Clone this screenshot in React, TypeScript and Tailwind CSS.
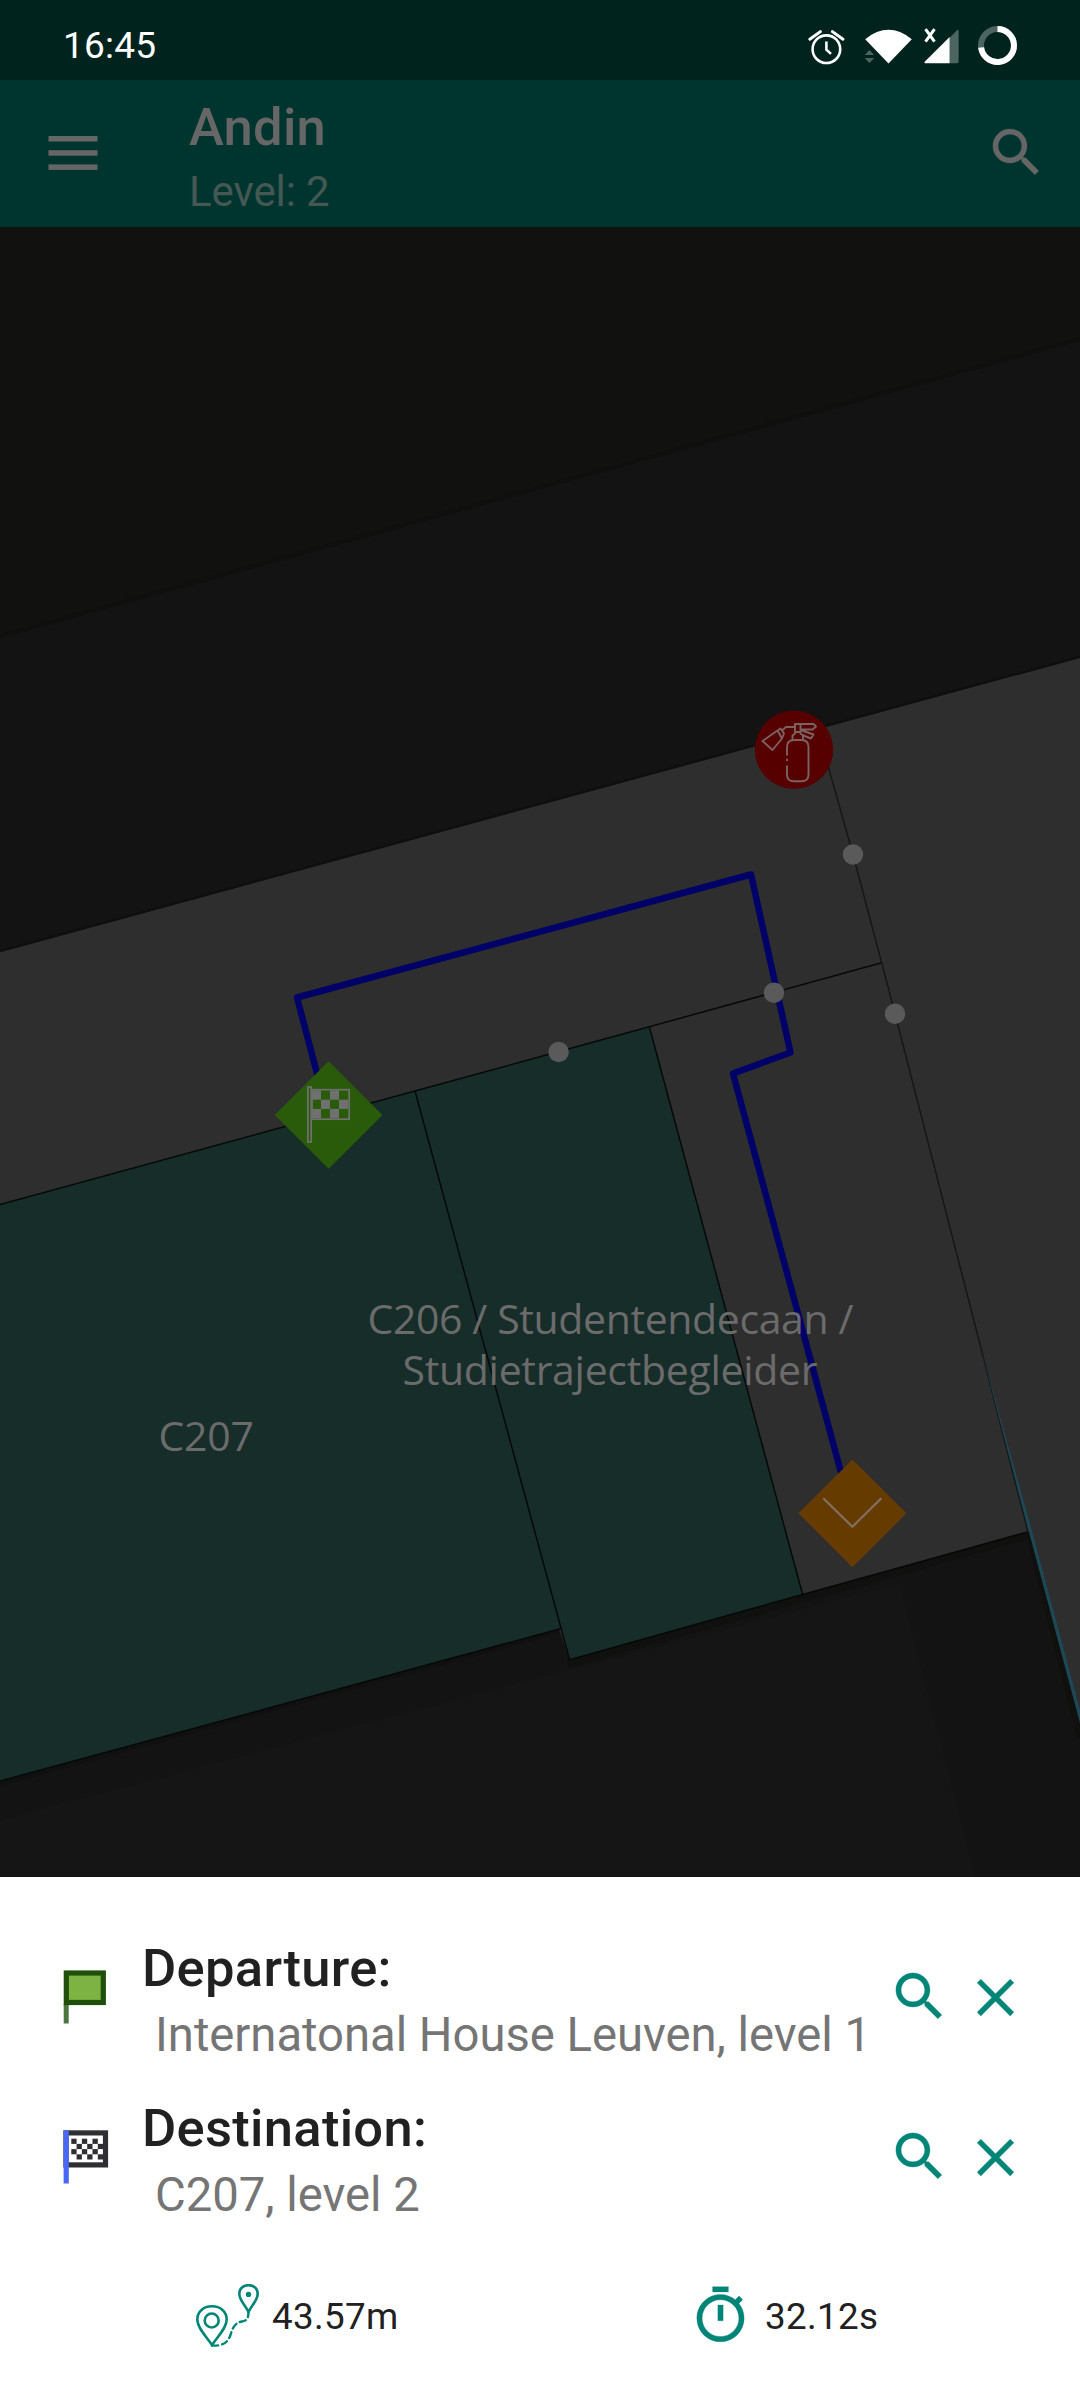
import React from "react";

const SEARCH =
  "M15.5 14h-.79l-.28-.27C15.41 12.59 16 11.11 16 9.5 16 5.91 13.09 3 9.5 3S3 5.91 3 9.5 5.91 16 9.5 16c1.61 0 3.09-.59 4.23-1.57l.27.28v.79l5 4.99L20.49 19l-4.99-5zm-6 0C7.01 14 5 11.99 5 9.5S7.01 5 9.5 5 14 7.01 14 9.5 11.99 14 9.5 14z";
const CLOSE =
  "M19 6.41L17.59 5 12 10.59 6.41 5 5 6.41 10.59 12 5 17.59 6.41 19 12 13.41 17.59 19 19 17.59 13.41 12z";
const TIMER =
  "M15 1H9v2h6V1zm-4 13h2V8h-2v6zm8.03-6.61l1.42-1.42c-.43-.51-.9-.99-1.41-1.41l-1.42 1.42C16.07 4.74 14.12 4 12 4c-4.97 0-9 4.03-9 9s4.02 9 9 9 9-4.03 9-9c0-2.12-.74-4.07-1.97-5.61zM12 20c-3.87 0-7-3.13-7-7s3.13-7 7-7 7 3.13 7 7-3.13 7-7 7z";

function Icon({ d, className }: { d: string; className: string }) {
  return (
    <svg viewBox="0 0 24 24" className={`block h-[63px] w-[63px] shrink-0 fill-current ${className}`}>
      <path d={d} stroke="currentColor" strokeWidth="0.12" />
    </svg>
  );
}

function StatusBar() {
  return (
    <div className="flex h-20 justify-between bg-[#00231d] pl-[63px] pr-[62px] text-white">
      <span className="mt-6 text-[37px] leading-[44px] tracking-[0.2px]">16:45</span>
      <div className="flex">
        <svg viewBox="806 0 40 80" className="h-20 w-10" fill="none" stroke="white" strokeWidth="2.6" strokeLinecap="round">
          <circle cx="826.4" cy="49.2" r="13.8" />
          <path d="M809.8 39.2l10.6-7.6M843 39.2l-10.6-7.6" strokeWidth="3" />
          <path d="M826.4 41.500v8.200l4.600 4.200" strokeLinecap="butt" />
        </svg>
        <svg viewBox="862 0 52 80" className="ml-4 h-20 w-[52px]">
          <path d="M865.2 39.2Q888.500 20.500 911.800 39.200L888.500 63.400z" fill="white" />
          <path d="M864.800 55l4.700-5 4.700 5zM864.800 58l4.700 5 4.700-5z" fill="#4d6560" />
        </svg>
        <svg viewBox="922 0 39 80" className="ml-2 h-20 w-[39px]">
          <path d="M949.600 37.800L957 30.300Q958.600 29 958.600 31V61.500Q958.600 63.300 957 63.300H949.600z" fill="#4d6560" />
          <path d="M949.600 37V63.300H925.300Q923.700 63 924.700 61.700z" fill="white" />
          <path d="M925.500 29.200l9 12.500M934.500 29.200l-9 12.500" stroke="white" strokeWidth="3" />
        </svg>
        <svg viewBox="977 0 41 80" className="ml-4 h-20 w-[41px]" fill="none" strokeWidth="6">
          <circle cx="997.500" cy="45.500" r="16.500" stroke="#4d6560" />
          <path d="M997.500 29A16.500 16.500 0 1 1 981.100 47.500" stroke="white" />
        </svg>
      </div>
    </div>
  );
}

function AppBar() {
  return (
    <div className="flex h-[147px] items-start bg-[#00352f] text-[#666666]">
      <svg viewBox="0 0 50 34" className="ml-12 mt-14 h-[34px] w-[50px] fill-current">
        <rect x="0.500" width="49" height="5.500" />
        <rect x="0.500" y="14.200" width="49" height="5.500" />
        <rect x="0.500" y="28.400" width="49" height="5.500" />
      </svg>
      <div className="ml-[91px] mt-[15px] flex grow flex-col">
        <span className="text-[52.5px] font-medium leading-[64px] tracking-[0.25px]">Andin</span>
        <span className="mt-2 text-[42px] leading-[50px] tracking-[-0.1px] text-[#445854]">Level: 2</span>
      </div>
      <Icon d={SEARCH} className="mr-8 mt-[41px]" />
    </div>
  );
}

const doors = [
  [853, 854.5],
  [774, 992.7],
  [895, 1013.7],
  [558.6, 1052],
];

// 4x3 chequered pattern, listed as the cells left filled
const flagCells = [
  [0, 0], [2, 0], [1, 1], [3, 1], [0, 2], [2, 2],
];

function FloorMap() {
  return (
    <svg viewBox="0 227 1080 1650" className="block h-[1650px] w-full bg-[#131313]">
      <path d="M0 227H1080V339L0 636z" fill="#11110f" />
      <path d="M0 636L1080 339" stroke="#0f0f0d" strokeWidth="4" />
      <path d="M0 1820L500 1688L899.600 1583.500L975 1877H0z" fill="#151515" />

      <path d="M0 952L1080 657.700V1720L1029 1532L569.600 1659.700L559 1628.800L0 1781z" fill="#2e2e2e" />
      <path d="M0 951L1080 656.700" stroke="#0f0f0f" strokeWidth="2.400" />

      <path d="M0 1784L559 1631" stroke="#10100e" strokeWidth="4" />
      <path d="M567.700 1664L802.600 1598.500L1025 1536" stroke="#10100e" strokeWidth="8" fill="none" />
      <path d="M1028 1531L1080 1738" stroke="#10100e" strokeWidth="6" />

      <path d="M0 1204.500L415 1091L649.300 1026.700L802.600 1594.500L569.600 1659.700L560.600 1628.800L0 1781z" fill="#172d29" />
      <g fill="none" stroke="#050a09" strokeWidth="1.500">
        <path d="M0 1204.500L415 1091L649.300 1026.700L881.700 962.700" />
        <path d="M415 1091L569.600 1659.700L802.600 1594.500L649.300 1026.700" />
        <path d="M0 1781L561 1628.500M802.600 1594.500L1028 1532" />
      </g>
      <path d="M825 755L853 854.500L881.700 962.700L895 1013.700L984 1360L1028 1532" fill="none" stroke="#171717" strokeWidth="1.500" />
      <path d="M980 1345L1029 1532L1080 1723V1710L1032 1531z" fill="#1d4855" />

      <path
        d="M328 1115L297 997.500L751 874.500L790.500 1052.500L733 1073.500L852 1513"
        fill="none"
        stroke="#000068"
        strokeWidth="6.500"
        strokeLinejoin="round"
      />
      {doors.map(([x, y]) => (
        <circle key={x} cx={x} cy={y} r="10.200" fill="#5a5a5a" />
      ))}

      <g fill="#6b6b6b" fontFamily="'Open Sans', 'Noto Sans', sans-serif" fontSize="41">
        <text x="367.500" y="1333.500" textLength="486">C206 / Studentendecaan /</text>
        <text x="402.500" y="1384.500" textLength="415">Studietrajectbegleider</text>
        <text x="158.500" y="1451" textLength="95.500">C207</text>
      </g>

      <circle cx="794" cy="749.700" r="39.200" fill="#560000" />
      <g fill="none" stroke="#7c6262" strokeWidth="1.900" strokeLinejoin="round">
        <path d="M787 755.500V747Q787 740 794 740H801.500Q808.500 740 808.500 747V774.500Q808.500 781.300 801.500 781.300H794Q787 781.300 787 774.500V765.500M787 758.800V761" />
        <path d="M792.500 739.500V735.500L795 733.500V724H800.500V733.500L803 735.500V739.500M795 727H786L782 730.500M795 732H800.500" />
        <path d="M800.500 724H813.500L816 726.500L812.500 729.500H800.500M800.500 730L813.500 734.500L811 738.500L802 735" />
        <path d="M762.500 741L777.500 730.500L782 738.500L772.500 750zM777.500 730.500L780.500 728.500L784 733.500L782 738.500" />
      </g>

      <path d="M328.600 1061.200L382.400 1115L328.600 1168.800L274.800 1115z" fill="#295b0a" />
      <g>
        <rect x="307.900" y="1087" width="3.300" height="55" fill="none" stroke="#707070" strokeWidth="1.700" />
        <rect x="312" y="1089.700" width="37.200" height="29.500" fill="none" stroke="#707070" strokeWidth="1.700" />
        {flagCells.map(([c, r]) => (
          <rect key={`${c}-${r}`} x={312 + c * 9} y={1090.500 + r * 9.200} width="9" height="9.200" fill="#707070" />
        ))}
      </g>

      <path d="M852.400 1459.400L906.400 1513.300L852.400 1567.200L798.400 1513.300z" fill="#663b00" />
      <path d="M823.300 1498.300L852.400 1526.700L881.300 1498.300" fill="none" stroke="#80705c" strokeWidth="2.300" />
    </svg>
  );
}

function GreenFlag() {
  return (
    <svg viewBox="63 1970 46 54" className="block h-[54px] w-[46px]">
      <rect x="63.700" y="2004" width="5" height="19.500" fill="#4b7640" />
      <rect x="66.300" y="1973" width="37" height="29.500" fill="#7cb342" stroke="#1f4f0b" strokeWidth="5.200" />
    </svg>
  );
}

const checks = [0, 1, 2, 3].flatMap((r) => [0, 2, 4].map((c) => [c + (r % 2), r]));

function FinishFlag() {
  return (
    <svg viewBox="63 2130 46 54" className="block h-[54px] w-[46px]">
      <rect x="66" y="2132.900" width="39.500" height="32" fill="white" stroke="#2f2f33" strokeWidth="5.200" />
      {checks.map(([c, r]) => (
        <rect key={`${c}-${r}`} x={71.300 + c * 5.300} y={2138.700 + r * 5.200} width="5.300" height="5.200" fill="#2f2f33" />
      ))}
      <rect x="63.600" y="2130.300" width="5.200" height="53.200" fill="#4a67f5" />
    </svg>
  );
}

function Stop({ flag, title, place }: { flag: React.ReactNode; title: string; place: string }) {
  return (
    <div className="flex h-40 items-start">
      <div className="ml-[63px] mt-[34px] w-[79px]">{flag}</div>
      <div className="flex grow flex-col whitespace-nowrap">
        <span className="text-[52.5px] font-medium leading-[64px] tracking-[0.3px] text-[#212121]">{title}</span>
        <span className="ml-[13px] mt-[5px] text-[47.25px] leading-[60px] tracking-[-0.03px] text-[#757575]">{place}</span>
      </div>
      <Icon d={SEARCH} className="mt-[29px] text-[#008577]" />
      <Icon d={CLOSE} className="ml-[13px] mr-[53px] mt-[30px] text-[#008577]" />
    </div>
  );
}

function RouteSheet() {
  return (
    <div className="flex h-[523px] flex-col bg-white pt-[59px]">
      <Stop flag={<GreenFlag />} title="Departure:" place="Internatonal House Leuven, level 1" />
      <Stop flag={<FinishFlag />} title="Destination:" place="C207, level 2" />
      <div className="mt-7 flex h-[63px] items-center text-[36.75px] leading-[44px] tracking-[0.35px] text-[#212121]">
        <div className="flex w-[493px] shrink-0 items-center pl-[194px]">
          <svg viewBox="194 2284 68 63" className="block h-[63px] w-[68px]" fill="none" stroke="#008577" strokeWidth="2.600">
            <path d="M212 2345C206 2336 197.300 2328 197.300 2319.500C197.300 2311.500 203.600 2306.300 212 2306.300S226.700 2311.500 226.700 2319.500C226.700 2328 218 2336 212 2345z" />
            <circle cx="211.700" cy="2320.500" r="7" />
            <path d="M248.500 2312C245 2305 239.300 2300 239.300 2294C239.300 2288.500 243.300 2285.200 248.500 2285.200S257.700 2288.500 257.700 2294C257.700 2300 252 2305 248.500 2312z" />
            <circle cx="248.500" cy="2294.400" r="2.700" fill="#008577" stroke="none" />
            <path d="M212 2345.600C224 2346 228 2342 230.500 2335C233 2326 236 2322.500 242 2321.500C247.500 2320.500 248.500 2318 248.500 2311" strokeDasharray="6 4" strokeLinecap="round" strokeWidth="2.400" />
          </svg>
          <span className="ml-[10px] mt-[3px]">43.57m</span>
        </div>
        <div className="flex grow items-center pl-[196px]">
          <Icon d={TIMER} className="text-[#008577]" />
          <span className="ml-[13px] mt-[3px]">32.12s</span>
        </div>
      </div>
    </div>
  );
}

export default function App() {
  return (
    <div className="flex h-[2400px] w-[1080px] flex-col overflow-hidden font-['Roboto',sans-serif]">
      <StatusBar />
      <AppBar />
      <FloorMap />
      <RouteSheet />
    </div>
  );
}
